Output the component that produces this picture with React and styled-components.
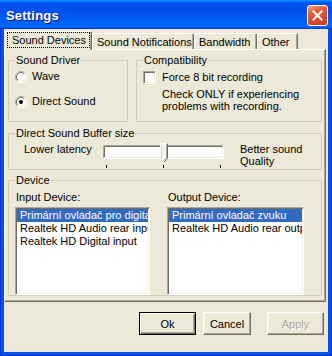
import React from 'react';
import styled, { createGlobalStyle } from 'styled-components';

const GlobalStyle = createGlobalStyle`
  html, body {
    margin: 0;
    padding: 0;
    background: #fff;
  }
  body {
    font-family: "Liberation Sans", Arial, sans-serif;
    font-size: 11px;
    color: #000;
  }
`;

const Window = styled.div`
  width: 332px;
  height: 356px;
  box-sizing: border-box;
  display: flex;
  flex-direction: column;
  background: #0853E0;
  border-left: 1px solid #0831D9;
  border-right: 1px solid #0831D9;
  border-bottom: 1px solid #0831D9;
`;

const TitleBar = styled.div`
  height: 29px;
  box-sizing: border-box;
  padding: 5px 4px 0 6px;
  display: flex;
  align-items: flex-start;
  justify-content: space-between;
  margin: 0 -1px;
  background: linear-gradient(
    180deg,
    #0997ff 0%,
    #0053ee 10%,
    #0050ee 40%,
    #0066ff 88%,
    #0066ff 93%,
    #005bff 95%,
    #003dd7 97%,
    #003dd7 100%
  );
`;

const Title = styled.span`
  font-family: "Liberation Sans", Arial, sans-serif;
  font-weight: bold;
  font-size: 13px;
  line-height: 21px;
  color: #fff;
  text-shadow: 1px 1px 0 #0a1883;
  letter-spacing: 0.2px;
`;

const CloseButton = styled.div`
  width: 21px;
  height: 21px;
  box-sizing: border-box;
  border: 1px solid #fff;
  border-radius: 3px;
  background: linear-gradient(160deg, #f3a58d 0%, #e35d3d 30%, #d8462a 70%, #c93c20 100%);
  display: flex;
  align-items: center;
  justify-content: center;
`;

const Body = styled.div`
  flex: 1;
  margin: 0 3px 3px;
  padding-top: 2px;
  background: #ece9d8;
  display: flex;
  flex-direction: column;
`;

const TabRow = styled.div`
  height: 18px;
  padding-left: 1px;
  display: flex;
  align-items: flex-end;
  position: relative;
  z-index: 1;
`;

const Tab = styled.div`
  width: ${p => p.$w}px;
  height: ${p => (p.$active ? 19 : 16)}px;
  margin-bottom: ${p => (p.$active ? -1 : 0)}px;
  box-sizing: border-box;
  border-top: 1px solid #fff;
  border-left: 1px solid #fff;
  border-right: 1px solid #716f64;
  border-radius: 2px 2px 0 0;
  box-shadow: inset -1px 0 0 #aca899;
  background: #ece9d8;
  padding: ${p => (p.$active ? '0 1px 0 1px' : '0 0 0 4px')};
  display: flex;
  align-items: ${p => (p.$active ? 'stretch' : 'center')};
  line-height: 14px;
  white-space: nowrap;
`;

const FocusBox = styled.div`
  flex: 1;
  border: 1px dotted #000;
  padding-left: 4px;
  margin-bottom: 2px;
  display: flex;
  align-items: center;
`;

const Panel = styled.div`
  margin-right: 2px;
  box-sizing: border-box;
  border: 1px solid;
  border-color: #fff #716f64 #716f64 #fff;
  box-shadow: inset -1px -1px 0 #aca899;
  padding: 4px 3px 5px 3px;
  display: flex;
  flex-direction: column;
  gap: ${p => p.$gap}px;
`;

const Row = styled.div`
  display: flex;
  gap: 8px;
`;

const Group = styled.fieldset`
  margin: 0;
  padding: 0;
  min-width: 0;
  box-sizing: border-box;
  border: 1px solid #d0d0bf;
  border-radius: 0;
  height: ${p => p.$h}px;
  width: ${p => (p.$w ? `${p.$w}px` : 'auto')};
  flex: ${p => (p.$w ? 'none' : 1)};
  margin-top: ${p => p.$mt || 0}px;
`;

const Legend = styled.legend`
  margin-left: 6px;
  padding: 0 1px;
  line-height: 13px;
  font-size: 11px;
`;

const GroupBody = styled.div`
  padding: ${p => p.$pad};
`;

const OptionList = styled.div`
  display: flex;
  flex-direction: column;
  gap: 12px;
`;

const Option = styled.label`
  display: flex;
  align-items: center;
  gap: ${p => p.$gap}px;
  height: 13px;
  line-height: 13px;
`;

const CheckBox = styled.span`
  display: block;
  width: 13px;
  height: 13px;
  box-sizing: border-box;
  border: 1px solid;
  border-color: #aca899 #fff #fff #aca899;
  box-shadow: inset 1px 1px 0 #716f64, inset -1px -1px 0 #f1efe2;
  background: #fff;
`;

const Note = styled.div`
  margin: 4px 0 0 19px;
  line-height: 12px;
`;

const SliderRow = styled.div`
  display: flex;
  align-items: flex-start;
`;

const SliderLabel = styled.div`
  width: ${p => p.$w}px;
  flex: none;
  line-height: 12px;
`;

const Columns = styled.div`
  display: grid;
  grid-template-columns: 135px 137px;
  column-gap: 17px;
`;

const FieldLabel = styled.div`
  padding-left: 1px;
  line-height: 12px;
  margin-bottom: 4px;
`;

const ListBox = styled.div`
  height: 88px;
  box-sizing: border-box;
  border: 1px solid;
  border-color: #aca899 #fff #fff #aca899;
  box-shadow: inset 1px 1px 0 #716f64, inset -1px -1px 0 #f1efe2;
  background: #fff;
  padding: 1px;
  overflow: hidden;
`;

const ListItem = styled.div`
  height: 13px;
  line-height: 13px;
  padding-left: 3px;
  white-space: nowrap;
  overflow: hidden;
  background: ${p => (p.$selected ? '#316ac5' : 'transparent')};
  color: ${p => (p.$selected ? '#fff' : '#000')};
`;

const ButtonRow = styled.div`
  display: flex;
  justify-content: flex-end;
  padding: 10px 4px 2px 0;
`;

const Button = styled.div`
  width: ${p => p.$w}px;
  height: 23px;
  margin-left: ${p => p.$gap || 0}px;
  box-sizing: border-box;
  border: 1px solid;
  border-color: ${p => (p.$default ? '#000' : '#fff #716f64 #716f64 #fff')};
  box-shadow: ${p =>
    p.$default
      ? 'inset 1px 1px 0 #fff, inset -1px -1px 0 #716f64, inset -2px -2px 0 #aca899'
      : 'inset -1px -1px 0 #aca899, inset 1px 1px 0 #f1efe2'};
  background: #ece9d8;
  display: flex;
  align-items: center;
  justify-content: center;
  color: ${p => (p.$disabled ? '#aca899' : '#000')};
  text-shadow: ${p => (p.$disabled ? '1px 1px 0 #fff' : 'none')};
`;

const Radio = ({ checked }) => (
  <svg width="12" height="12" viewBox="0 0 12 12">
    <circle cx="6" cy="6" r="4.5" fill="#fff" />
    <path d="M2.11 9.89A5.5 5.5 0 0 1 9.89 2.11" stroke="#aca899" fill="none" />
    <path d="M2.82 9.18A4.5 4.5 0 0 1 9.18 2.82" stroke="#716f64" fill="none" />
    <path d="M9.89 2.11A5.5 5.5 0 0 1 2.11 9.89" stroke="#fff" fill="none" />
    <path d="M9.18 2.82A4.5 4.5 0 0 1 2.82 9.18" stroke="#f1efe2" fill="none" />
    {checked && <circle cx="6" cy="6" r="2" fill="#000" />}
  </svg>
);

const Slider = () => (
  <svg width="122" height="26" viewBox="0 0 122 26" style={{ flex: 'none' }}>
    <rect x="0" y="2" width="121" height="14" fill="#fdfdfb" />
    <path d="M0.5 15.5V2.5H120.5" stroke="#aca899" fill="none" />
    <path d="M1.5 14.5V3.5H119.5" stroke="#716f64" fill="none" />
    <path d="M0.5 15.5H120.5V2.5" stroke="#fff" fill="none" />
    <path d="M1.5 14.5H119.5V3.5" stroke="#f1efe2" fill="none" />
    <path d="M3.5 22V25M60.5 22V25M117.5 22V25" stroke="#000" fill="none" />
    <path d="M57.5 0.5H64.5V15.5L61 19L57.5 15.5Z" fill="#f7f6f1" />
    <path d="M57.5 15.5V0.5H64.5" stroke="#fff" fill="none" />
    <path d="M58.5 15V1.5" stroke="#d6d2c2" fill="none" />
    <path d="M64.5 0.5V15.5L61 19" stroke="#716f64" fill="none" />
    <path d="M63.5 1.5V15L60.5 18" stroke="#aca899" fill="none" />
  </svg>
);

const tabs = [
  { label: 'Sound Devices', w: 87, active: true },
  { label: 'Sound Notifications', w: 102 },
  { label: 'Bandwidth', w: 63 },
  { label: 'Other', w: 41 },
];

const inputDevices = [
  'Primární ovladač pro digitalizaci zvuku',
  'Realtek HD Audio rear input',
  'Realtek HD Digital input',
];

const outputDevices = ['Primární ovladač zvuku', 'Realtek HD Audio rear output'];

export default function App() {
  return (
    <>
      <GlobalStyle />
      <Window>
        <TitleBar>
          <Title>Settings</Title>
          <CloseButton>
            <svg width="11" height="11" viewBox="0 0 11 11">
              <path d="M1.5 1.5L9.5 9.5M9.5 1.5L1.5 9.5" stroke="#fff" strokeWidth="2" strokeLinecap="square" />
            </svg>
          </CloseButton>
        </TitleBar>
        <Body>
          <TabRow>
            {tabs.map(t => (
              <Tab key={t.label} $w={t.w} $active={t.active}>
                {t.active ? <FocusBox>{t.label}</FocusBox> : t.label}
              </Tab>
            ))}
          </TabRow>
          <Panel $gap={4}>
            <Row>
              <Group $w={120} $h={68}>
                <Legend>Sound Driver</Legend>
                <GroupBody $pad="3px 0 0 6px">
                  <OptionList>
                    <Option $gap={5}>
                      <Radio />
                      Wave
                    </Option>
                    <Option $gap={5}>
                      <Radio checked />
                      Direct Sound
                    </Option>
                  </OptionList>
                </GroupBody>
              </Group>
              <Group $h={68}>
                <Legend>Compatibility</Legend>
                <GroupBody $pad="4px 0 0 6px">
                  <Option $gap={6}>
                    <CheckBox />
                    Force 8 bit recording
                  </Option>
                  <Note>
                    Check ONLY if experiencing
                    <br />
                    problems with recording.
                  </Note>
                </GroupBody>
              </Group>
            </Row>
            <Group $h={52} $mt={1}>
              <Legend>Direct Sound Buffer size</Legend>
              <GroupBody $pad="3px 0 0 15px">
                <SliderRow>
                  <SliderLabel $w={79}>Lower latency</SliderLabel>
                  <Slider />
                  <SliderLabel $w={70} style={{ marginLeft: 15 }}>
                    Better sound
                    <br />
                    Quality
                  </SliderLabel>
                </SliderRow>
              </GroupBody>
            </Group>
            <Group $h={129}>
              <Legend>Device</Legend>
              <GroupBody $pad="4px 17px 0 6px">
                <Columns>
                  <div>
                    <FieldLabel>Input Device:</FieldLabel>
                    <ListBox>
                      {inputDevices.map((d, i) => (
                        <ListItem key={d} $selected={i === 0}>{d}</ListItem>
                      ))}
                    </ListBox>
                  </div>
                  <div>
                    <FieldLabel>Output Device:</FieldLabel>
                    <ListBox>
                      {outputDevices.map((d, i) => (
                        <ListItem key={d} $selected={i === 0}>{d}</ListItem>
                      ))}
                    </ListBox>
                  </div>
                </Columns>
              </GroupBody>
            </Group>
          </Panel>
          <ButtonRow>
            <Button $w={57} $default>Ok</Button>
            <Button $w={48} $gap={7}>Cancel</Button>
            <Button $w={57} $gap={16} $disabled>Apply</Button>
          </ButtonRow>
        </Body>
      </Window>
    </>
  );
}
